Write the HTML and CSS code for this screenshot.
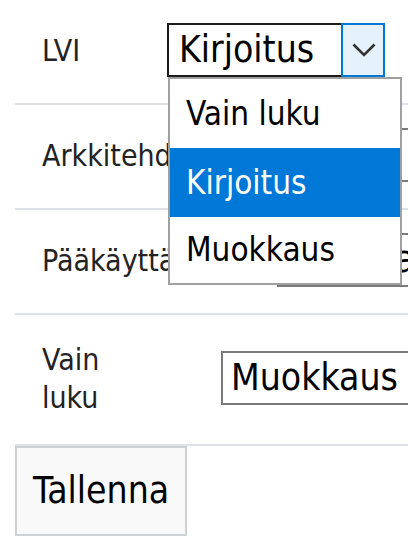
FILE: index.html
```html
<!DOCTYPE html>
<html lang="fi">
<head>
<meta charset="utf-8">
<title>Oikeudet</title>
<link rel="stylesheet" href="styles.css">
</head>
<body>
<div class="form">
  <div class="row row--lvi">
    <div class="label">LVI</div>
    <div class="field">
      <div class="combo">
        <div class="combo-value">Kirjoitus</div>
        <div class="combo-btn">
          <svg class="chevron" width="24" height="14" viewBox="0 0 24 14"><polyline points="1.5,1.5 12,12 22.5,1.5" fill="none" stroke="#333" stroke-width="2.6"/></svg>
        </div>
        <ul class="combo-list">
          <li class="combo-item">Vain luku</li>
          <li class="combo-item is-selected">Kirjoitus</li>
          <li class="combo-item">Muokkaus</li>
        </ul>
      </div>
    </div>
  </div>
  <div class="row row--arch">
    <div class="label">Arkkitehdit</div>
    <div class="field"><div class="select">Vain luku</div></div>
  </div>
  <div class="row row--admin">
    <div class="label">Pääkäyttäjä</div>
    <div class="field"><div class="select">Muokkaus</div></div>
  </div>
  <div class="row row--read">
    <div class="label"><span class="label-wrap">Vain luku</span></div>
    <div class="field"><div class="select">Muokkaus</div></div>
  </div>
</div>
<div class="actions">
  <button class="btn" type="button">Tallenna</button>
</div>
</body>
</html>
```
FILE: styles.css
```css
html, body {
  margin: 0;
  padding: 0;
  background: #fff;
  overflow: hidden;
}
body {
  font-family: "DejaVu Sans Condensed", "DejaVu Sans", sans-serif;
  font-stretch: condensed;
  color: #212529;
  width: 408px;
  height: 541px;
}
.form {
  margin-left: 15px;
}
.row {
  display: flex;
  align-items: center;
  border-bottom: 2px solid #dee2e6;
}
.label {
  flex: 0 0 auto;
  box-sizing: border-box;
  padding: 26px 0 27px 27px;
  font-size: 30px;
  line-height: 38px;
  color: #222;
  white-space: nowrap;
}
.label-wrap {
  display: inline-block;
  white-space: normal;
  width: 90px;
}
.row--lvi .label { width: 152px; }
.row--arch .label { width: 215px; }
.row--admin .label { width: 262px; }
.row--read .label { width: 206px; }
.field {
  flex: 0 0 auto;
  padding: 23px 0 26px;
}
.select {
  box-sizing: border-box;
  height: 54px;
  width: 320px;
  border: 2px solid #7a7a7a;
  background: #fff;
  color: #000;
  font-size: 37px;
  line-height: 50px;
  padding-left: 8px;
  white-space: nowrap;
}
.combo {
  position: relative;
  display: flex;
  height: 54px;
  width: 218px;
  box-sizing: border-box;
  color: #000;
}
.combo-value {
  box-sizing: border-box;
  width: 174px;
  height: 54px;
  border: 2px solid #1a1a1a;
  border-right: 0;
  background: #fff;
  font-size: 37px;
  line-height: 50px;
  padding-left: 10px;
  white-space: nowrap;
}
.combo-btn {
  box-sizing: border-box;
  width: 44px;
  height: 54px;
  border: 2px solid #0078d7;
  background: #e5f1fb;
  display: flex;
  align-items: center;
  justify-content: center;
  padding-left: 1px;
}
.chevron { display: block; }
.combo-list {
  position: absolute;
  left: 1px;
  top: 54px;
  z-index: 10;
  width: 234px;
  box-sizing: border-box;
  margin: 0;
  padding: 0;
  list-style: none;
  background: #fff;
  border: 2px solid #a0a0a0;
}
.combo-item {
  height: 69px;
  line-height: 69px;
  padding-left: 16px;
  font-size: 33px;
  color: #000;
  white-space: nowrap;
}
.combo-item:last-child {
  height: 66px;
  line-height: 66px;
}
.combo-item.is-selected {
  background: #0078d7;
  color: #fff;
}
.actions {
  margin-left: 15px;
}
.btn {
  display: block;
  box-sizing: border-box;
  height: 90px;
  margin: 0;
  padding: 0 16px;
  border: 2px solid #cfd2d4;
  background: #f9f9f9;
  color: #000;
  font-family: inherit;
  font-stretch: condensed;
  font-size: 37px;
  line-height: 86px;
  border-radius: 0;
}
```
